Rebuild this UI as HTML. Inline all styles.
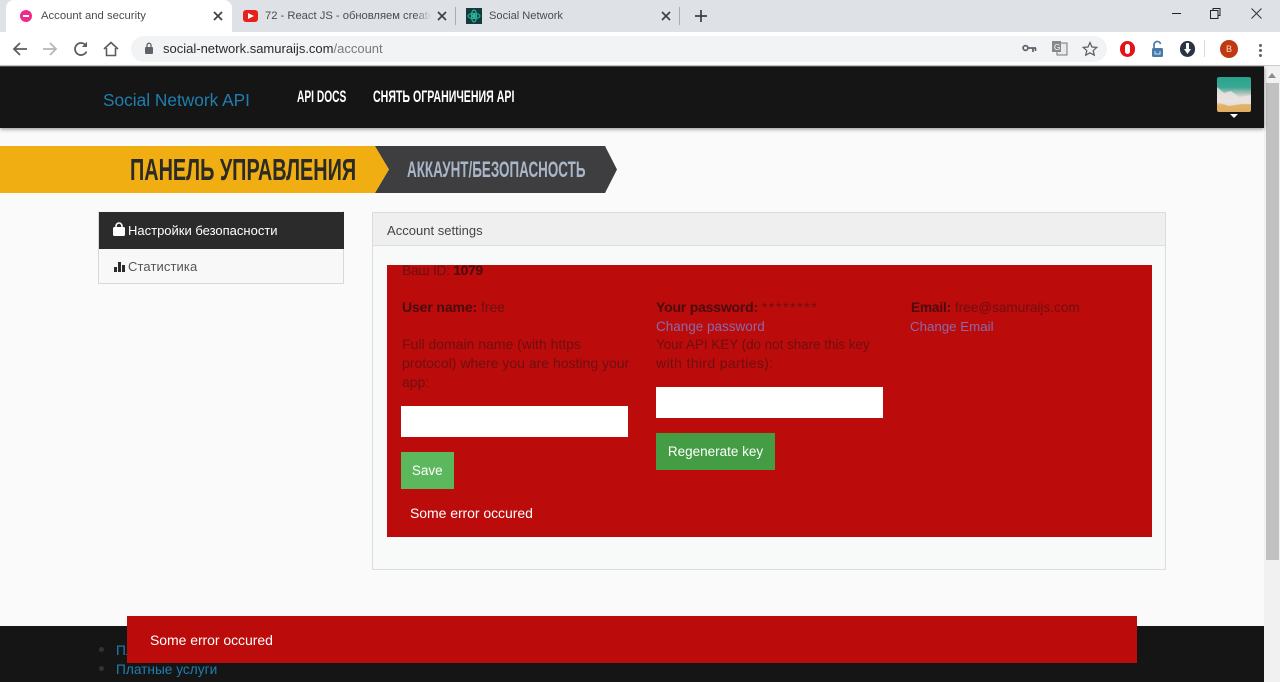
<!DOCTYPE html>
<html><head><meta charset="utf-8"><title>Account and security</title>
<style>
html,body{margin:0;padding:0;width:1280px;height:682px;overflow:hidden;background:#fff}
body{font-family:"Liberation Sans","Noto Sans CJK SC",sans-serif;position:relative}
.a{position:absolute;white-space:nowrap}
.c{transform-origin:0 50%;font-weight:bold}
.t{font-size:14px;line-height:19px;color:#6f0f10}
.t b{color:#4a0c0c;letter-spacing:-.12px}
.l{color:#8a6aa8;font-size:13.5px}
svg{position:absolute;overflow:visible}
</style></head><body>
<!-- browser chrome -->
<div class="a" style="left:0;top:0;width:1280px;height:32px;background:#dee1e6"></div>
<div class="a" style="left:6px;top:0;width:226px;height:32px;background:#fff;border-radius:8px 8px 0 0"></div>
<div class="a" style="left:0;top:32px;width:1280px;height:33px;background:#fff;border-bottom:1px solid #ccc"></div>
<div class="a" style="left:20px;top:10px;width:12px;height:12px;border-radius:6px;background:#ee2a8a"></div>
<div class="a" style="left:23px;top:15px;width:6px;height:2px;background:#fff"></div>
<div class="a" style="left:41px;top:8px;font-size:11.3px;line-height:17px;color:#4a4c50">Account and security</div>
<svg style="left:213px;top:11px" width="10" height="10"><path d="M1 1L9 9M9 1L1 9" stroke="#3c4043" stroke-width="1.7"/></svg>
<div class="a" style="left:243px;top:10px;width:15px;height:12px;border-radius:3px;background:#e8201c"></div>
<svg style="left:248px;top:13px" width="6" height="6"><path d="M0 0L6 3L0 6Z" fill="#fff"/></svg>
<div class="a" style="left:265px;top:8px;width:165px;overflow:hidden;font-size:11.2px;line-height:17px;color:#4a4c50">72 - React JS - обновляем create</div>
<div class="a" style="left:415px;top:8px;width:16px;height:16px;background:linear-gradient(90deg,rgba(222,225,230,0),#dee1e6)"></div>
<svg style="left:437px;top:11px" width="10" height="10"><path d="M1 1L9 9M9 1L1 9" stroke="#3c4043" stroke-width="1.7"/></svg>
<div class="a" style="left:455px;top:7px;width:1px;height:18px;background:#a9acb0"></div>
<div class="a" style="left:466px;top:8px;width:16px;height:16px;background:#123c3e"></div>
<svg style="left:466px;top:8px" width="16" height="16" fill="none" stroke="#2fb9a0"><ellipse cx="8" cy="8" rx="6" ry="2.6"/><ellipse cx="8" cy="8" rx="2.6" ry="6"/><circle cx="8" cy="8" r="1.5" fill="#2fb9a0"/></svg>
<div class="a" style="left:489px;top:8px;font-size:11.1px;line-height:17px;color:#4a4c50">Social Network</div>
<svg style="left:661px;top:11px" width="10" height="10"><path d="M1 1L9 9M9 1L1 9" stroke="#3c4043" stroke-width="1.7"/></svg>
<div class="a" style="left:679px;top:7px;width:1px;height:18px;background:#a9acb0"></div>
<svg style="left:695px;top:10px" width="12" height="12"><path d="M6 0V12M0 6H12" stroke="#3c4043" stroke-width="1.7"/></svg>
<div class="a" style="left:1172px;top:13px;width:9px;height:1px;background:#222"></div>
<svg style="left:1210px;top:8px" width="11" height="11" fill="none" stroke="#222"><path d="M3 2.5V.5H10V7.5H8M.5 2.5H8V10.5H.5Z"/></svg>
<svg style="left:1251px;top:8px" width="11" height="11"><path d="M.5 .5L10.5 10.5M10.5 .5L.5 10.5" stroke="#333"/></svg>
<!-- toolbar -->
<svg style="left:12px;top:41px" width="16" height="16" fill="none" stroke="#5a5d61" stroke-width="1.8"><path d="M15 8H2M8 2L2 8L8 14"/></svg>
<svg style="left:42px;top:41px" width="16" height="16" fill="none" stroke="#b4b7bb" stroke-width="1.8"><path d="M1 8H14M8 2L14 8L8 14"/></svg>
<svg style="left:73px;top:41px" width="16" height="16" fill="none" stroke="#5a5d61" stroke-width="1.8"><path d="M13.5 10.5A6 6 0 1 1 12.5 4"/><path d="M14 .8V6H9" fill="#5a5d61" stroke="none"/></svg>
<svg style="left:103px;top:41px" width="16" height="16" fill="none" stroke="#5a5d61" stroke-width="1.6"><path d="M1 8L8 1.5L15 8M3.5 7V14.5H12.5V7"/></svg>
<div class="a" style="left:131px;top:36px;width:976px;height:26px;border-radius:13px;background:#f1f3f4"></div>
<svg style="left:144px;top:42px" width="10" height="13"><rect x="1" y="5" width="8" height="7" rx="1" fill="#5f6368"/><path d="M3 5V3.2A2 2 0 0 1 7 3.2V5" fill="none" stroke="#5f6368" stroke-width="1.3"/></svg>
<div class="a" style="left:163px;top:41px;font-size:13px;line-height:16px;color:#2a2b2d">social-network.samuraijs.com<span style="color:#777a7e">/account</span></div>
<svg style="left:1022px;top:44px" width="15" height="9" fill="none" stroke="#5f6368" stroke-width="1.7"><circle cx="3.5" cy="4" r="2.4"/><path d="M6 4H14M11 4V8M13.5 4V7"/></svg>
<svg style="left:1052px;top:41px" width="16" height="15"><rect x="5" y="2" width="10" height="12" fill="#e8eaed" stroke="#777"/><rect x="0" y="0" width="9" height="11" fill="#888"/><text x="2" y="9" font-size="8" fill="#fff" font-family="Liberation Sans">G</text></svg>
<svg style="left:1082px;top:41px" width="16" height="15" fill="none" stroke="#5a5d61" stroke-width="1.2"><path d="M8 1.5L10 6L14.8 6.4L11.2 9.6L12.3 14.2L8 11.8L3.7 14.2L4.8 9.6L1.2 6.4L6 6Z"/></svg>
<div class="a" style="left:1120px;top:41px;width:15px;height:16px;border-radius:8px;background:#e2141a"></div>
<div class="a" style="left:1125px;top:44px;width:5px;height:10px;border-radius:3px;background:#fff"></div>
<svg style="left:1150px;top:40px" width="15" height="17"><path d="M4 8V4.5A3.3 3.3 0 0 1 10.5 4" fill="none" stroke="#4a78a8" stroke-width="1.7"/><rect x="2" y="8" width="11" height="9" rx="1.5" fill="#4a78a8"/><path d="M5 11V14H10V11" stroke="#cfe0ee" fill="none"/></svg>
<div class="a" style="left:1180px;top:41px;width:15px;height:16px;border-radius:8px;background:#2a3442"></div>
<svg style="left:1184px;top:43px" width="7" height="12"><path d="M2 0H5V6H7L3.5 11L0 6H2Z" fill="#fff"/></svg>
<div class="a" style="left:1204px;top:40px;width:1px;height:17px;background:#d6d8da"></div>
<div class="a" style="left:1220px;top:40px;width:18px;height:18px;border-radius:9px;background:#bf3a12;color:#ffdcc8;font-size:9px;line-height:18px;text-align:center">B</div>
<div class="a" style="left:1259px;top:44px;width:3px;height:3px;border-radius:2px;background:#5f6368;box-shadow:0 5px 0 #5f6368,0 10px 0 #5f6368"></div>

<!-- page -->
<div class="a" style="left:0;top:66px;width:1265px;height:616px;background:#fafafa"></div>
<!-- scrollbar -->
<div class="a" style="left:1264px;top:66px;width:16px;height:616px;background:#f1f1f1"></div>
<div class="a" style="left:1266px;top:83px;width:13px;height:477px;background:#c1c1c1"></div>
<svg style="left:1268px;top:73px" width="8" height="5"><path d="M0 5L4 0L8 5Z" fill="#8a8a8a"/></svg>
<!-- header -->
<div class="a" style="left:0;top:66px;width:1264px;height:1px;background:#555"></div>
<div class="a" style="left:0;top:67px;width:1264px;height:61px;background:#151515;box-shadow:0 1px 4px rgba(0,0,0,.45)"></div>
<div class="a" style="left:103px;top:88px;font-size:17.3px;line-height:24px;color:#1f7fb0">Social Network API</div>
<div class="a c" style="left:297px;top:86px;font-size:17px;line-height:22px;color:#fff;transform:scaleX(.6)">API DOCS</div>
<div class="a c" style="left:373px;top:86px;font-size:17px;line-height:22px;color:#fff;transform:scaleX(.624)">СНЯТЬ ОГРАНИЧЕНИЯ API</div>
<div class="a" style="left:1217px;top:77px;width:34px;height:35px;border-radius:2px;overflow:hidden;background:linear-gradient(180deg,#27a28c 0,#3ba894 30%,#8fbcb0 42%,#d8d4d0 55%,#e6dcd8 72%,#e2b468 80%,#dfae62 100%)">
<svg style="left:0;top:0" width="34" height="35"><path d="M0 10L7 16L14 14L22 20L34 18V27L24 27L12 29L0 25Z" fill="#e9e4e2" opacity=".85"/></svg></div>
<svg style="left:1230px;top:114px" width="8" height="4"><path d="M0 0H8L4 4Z" fill="#fff"/></svg>
<!-- banner -->
<svg style="left:0;top:146px" width="620" height="47"><path d="M0 0H375L389 23.5L375 47H0Z" fill="#f0ae12"/><path d="M375 0H605L617 23.5L605 47H375L389 23.5Z" fill="#3e3e40"/></svg>
<div class="a c" style="left:130px;top:152px;font-size:31px;line-height:36px;color:#2a2a26;transform:scaleX(.64)">ПАНЕЛЬ УПРАВЛЕНИЯ</div>
<div class="a c" style="left:407px;top:156px;font-size:22px;line-height:28px;color:#a9b6c8;transform:scaleX(.61)">АККАУНТ/БЕЗОПАСНОСТЬ</div>
<!-- sidebar -->
<div class="a" style="left:98px;top:211px;width:244px;height:72px;background:#f8f8f8;border:1px solid #d8d8d8;border-top:0"></div>
<div class="a" style="left:99px;top:212px;width:245px;height:37px;background:#2b2b2b"></div>
<svg style="left:113px;top:223px" width="12" height="13"><rect x="0" y="4" width="12" height="9" rx="1.5" fill="#fff"/><path d="M3 5V3A3 3 0 0 1 9 3V5" fill="none" stroke="#fff" stroke-width="1.6"/></svg>
<div class="a" style="left:128px;top:222px;font-size:13px;line-height:17px;color:#fff">Настройки безопасности</div>
<svg style="left:114px;top:261px" width="12" height="11" fill="#2b2b2b"><rect x="0" y="6" width="3" height="5"/><rect x="4" y="1" width="3" height="10"/><rect x="8" y="4" width="3" height="7"/></svg>
<div class="a" style="left:128px;top:258px;font-size:13px;line-height:17px;color:#555;letter-spacing:.1px">Статистика</div>
<!-- panel -->
<div class="a" style="left:372px;top:212px;width:792px;height:356px;background:#f8f9f9;border:1px solid #dcdcdc"></div>
<div class="a" style="left:373px;top:213px;width:792px;height:32px;background:#efefef;border-bottom:1px solid #dedede"></div>
<div class="a" style="left:387px;top:222px;font-size:13px;line-height:17px;color:#444;letter-spacing:.02px">Account settings</div>
<div class="a" style="left:387px;top:265px;width:765px;height:272px;background:#bb0b0b"></div>
<div class="a" style="left:387px;top:265px;width:765px;height:12px;overflow:hidden"><div class="a t" style="left:15px;top:-4px;letter-spacing:-.35px">Ваш ID: <b style="letter-spacing:-.4px">1079</b></div></div>
<div class="a t" style="left:402px;top:298px"><b>User name:</b> free</div>
<div class="a t" style="left:402px;top:335px">Full domain name (with https<br>protocol) where you are hosting your<br>app:</div>
<div class="a" style="left:401px;top:406px;width:227px;height:31px;background:#fff"></div>
<div class="a" style="left:401px;top:452px;width:52.5px;height:37px;background:#5cb85c;color:#fff;font-size:13.5px;line-height:38px;text-align:center">Save</div>
<div class="a" style="left:410px;top:504px;font-size:14px;line-height:18px;color:#fff;letter-spacing:-.05px">Some error occured</div>
<div class="a t" style="left:656px;top:298px"><b style="letter-spacing:-.2px">Your password:</b> <span style="letter-spacing:1.6px">********</span></div>
<div class="a t l" style="left:656px;top:317px">Change password</div>
<div class="a t" style="left:656px;top:335px;font-size:13.4px">Your API KEY (do not share this key</div>
<div class="a t" style="left:656px;top:354px;letter-spacing:.35px">with third parties):</div>
<div class="a" style="left:656px;top:387px;width:227px;height:31px;background:#fff"></div>
<div class="a" style="left:656px;top:433px;width:119px;height:37px;background:#449d44;color:#fff;font-size:13.5px;line-height:38px;text-align:center">Regenerate key</div>
<div class="a t" style="left:911px;top:298px;font-size:13.6px"><b>Email:</b> free@samuraijs.com</div>
<div class="a t l" style="left:910px;top:317px;font-size:13.3px">Change Email</div>
<!-- footer -->
<div class="a" style="left:0;top:626px;width:1264px;height:56px;background:#151515"></div>
<div class="a" style="left:99px;top:647px;width:5px;height:5px;border-radius:3px;background:#333"></div>
<div class="a" style="left:99px;top:666px;width:5px;height:5px;border-radius:3px;background:#333"></div>
<div class="a" style="left:116px;top:642px;font-size:13.7px;line-height:18px;color:#1f7fb0">Платные услуги</div>
<div class="a" style="left:116px;top:661px;font-size:13.7px;line-height:18px;color:#1f7fb0">Платные услуги</div>
<!-- toast -->
<div class="a" style="left:127px;top:616px;width:1010px;height:47px;background:#bb0b0b"></div>
<div class="a" style="left:150px;top:631px;font-size:14px;line-height:18px;color:#fff;letter-spacing:-.05px">Some error occured</div>
</body></html>
